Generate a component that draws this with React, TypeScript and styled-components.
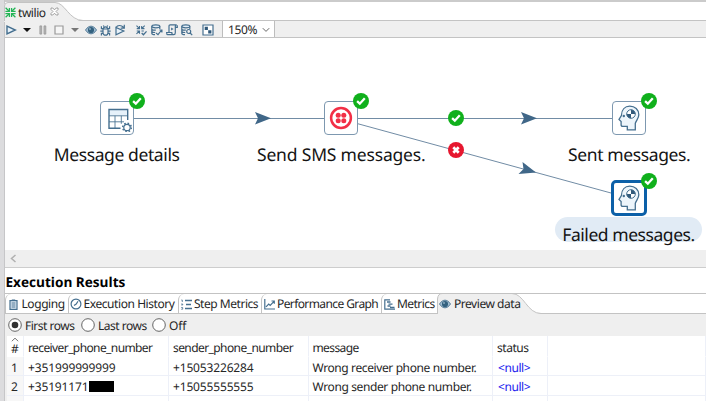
import React from 'react';
import styled, { createGlobalStyle } from 'styled-components';

const BLUE = '#456f8f';
const LINE = '#c3c3c3';

const Global = createGlobalStyle`
  *, *::before, *::after { box-sizing: border-box; }
  body { margin: 0; background: #fff; overflow: hidden; }
  svg { display: block; flex: none; }
`;

const Window = styled.div`
  width: 706px;
  height: 401px;
  display: flex;
  overflow: hidden;
  background: #fff;
  color: #262626;
  font: 12px/16px 'Noto Sans', 'Open Sans', sans-serif;
  text-rendering: geometricPrecision;
`;

const Sash = styled.div`
  flex: none;
  width: 5px;
  background: #dcdcde;
  border-right: 1px solid #c6c6c8;
`;

const Main = styled.div`
  flex: 1;
  min-width: 0;
  display: flex;
  flex-direction: column;
`;

const Text = styled.span<{ $track?: number }>`
  white-space: nowrap;
  letter-spacing: ${p => p.$track ?? 0}px;
`;

const EditorTabs = styled.div`
  height: 21px;
  flex: none;
  border-top: 2px solid #cbcbcb;
  border-bottom: 1px solid ${LINE};
`;

const EditorTab = styled.div`
  position: relative;
  width: 82px;
  height: 19px;
  display: flex;
  align-items: center;
  padding-top: 2px;
  gap: 2px;
`;

const TabShape = styled.svg`
  position: absolute;
  left: 0;
  top: 0;
  overflow: visible;
`;

const Front = styled.div<{ $ml?: number; $mt?: number }>`
  position: relative;
  display: flex;
  margin-left: ${p => p.$ml ?? 0}px;
  margin-top: ${p => p.$mt ?? 0}px;
`;

const Toolbar = styled.div`
  height: 17px;
  flex: none;
  display: flex;
  align-items: center;
  background: #efefef;
  border-bottom: 1px solid ${LINE};
`;

const Tool = styled.div<{ $w: number }>`
  width: ${p => p.$w}px;
  flex: none;
  display: flex;
  align-items: center;
`;

const ZoomBox = styled.div`
  width: 53px;
  height: 16px;
  display: flex;
  align-items: center;
  justify-content: space-between;
  padding: 2px 4px 0 5px;
  background: #fff;
  border-left: 1px solid #bdbdbd;
  border-right: 1px solid #bdbdbd;
`;

const Canvas = styled.div`
  position: relative;
  height: 212px;
  flex: none;
  overflow: hidden;
  background: #fff;
`;

const Hops = styled.svg`
  position: absolute;
  left: 0;
  top: 0;
`;

const Step = styled.div<{ $x: number; $y: number; $selected?: boolean }>`
  position: absolute;
  left: ${p => p.$x}px;
  top: ${p => p.$y}px;
  width: ${p => (p.$selected ? 36 : 34)}px;
  height: ${p => (p.$selected ? 36 : 34)}px;
  display: flex;
  align-items: center;
  justify-content: center;
  background: #fff;
  border: ${p => (p.$selected ? '3px solid #0c60a8' : '1px solid #7d98b0')};
  border-radius: ${p => (p.$selected ? 5 : 4)}px;
`;

const Badge = styled.div<{ $x: number; $y: number }>`
  position: absolute;
  left: ${p => p.$x - 8}px;
  top: ${p => p.$y - 8}px;
`;

const StepLabel = styled.div<{ $x: number; $y: number; $track?: number }>`
  position: absolute;
  left: ${p => p.$x}px;
  top: ${p => p.$y}px;
  font-size: 17.5px;
  line-height: 24px;
  color: #141414;
  white-space: nowrap;
  letter-spacing: ${p => p.$track ?? 0}px;
`;

const LabelPill = styled.div`
  position: absolute;
  left: 550px;
  top: 179px;
  width: 147px;
  height: 25px;
  border-radius: 13px;
  background: #e1ebf5;
`;

const ScrollStrip = styled.div`
  height: 18px;
  flex: none;
  display: flex;
  align-items: center;
  padding-left: 5px;
  background: #efefef;
  border-bottom: 1px solid #cdcdcd;
`;

const Heading = styled.h2`
  margin: 0;
  height: 25px;
  flex: none;
  padding-left: 0.5px;
  font-family: 'Open Sans', 'Noto Sans', sans-serif;
  font-size: 13.6px;
  line-height: 28px;
  font-weight: 700;
  color: #000;
`;

const ResultTabs = styled.div`
  position: relative;
  height: 21px;
  flex: none;
  display: flex;
  border-top: 1px solid ${LINE};
  border-bottom: 1px solid ${LINE};
`;

const ResultTab = styled.div<{ $w: number; $gap?: number; $pad?: number }>`
  width: ${p => p.$w}px;
  flex: none;
  height: 19px;
  display: flex;
  align-items: center;
  gap: ${p => p.$gap ?? 3}px;
  padding: 1px 0 0 ${p => p.$pad ?? 2}px;
  border-left: 1px solid ${LINE};
  border-top-left-radius: 6px;
`;

const ActiveTab = styled.div`
  position: relative;
  width: 104px;
  height: 20px;
  display: flex;
  align-items: center;
  gap: 3px;
  padding: 0 0 0 2px;
`;

const Radios = styled.div`
  height: 22px;
  flex: none;
  display: flex;
  align-items: center;
  padding-left: 3px;
  background: #efefef;
`;

const Radio = styled.div<{ $w: number }>`
  width: ${p => p.$w}px;
  flex: none;
  display: flex;
  align-items: center;
  gap: 3px;

  ${Text} {
    padding-top: 1px;
  }
`;

const TableFrame = styled.div`
  flex: 1;
  padding-left: 2px;
  background: #efefef;
`;

const Table = styled.div`
  height: 100%;
  display: grid;
  grid-template-columns: 17px 145px 140px 184px 55px 1fr;
  grid-template-rows: 21px 19px 20px 6px;
  background: #fff;
`;

const Cell = styled.div<{ $head?: boolean; $index?: boolean; $pad?: number }>`
  display: flex;
  align-items: flex-start;
  padding: ${p => (p.$head ? '4px' : '3px')} 0 0 ${p => p.$pad ?? 4}px;
  min-height: 0;
  border-right: 1px solid #edf0f8;
  border-bottom: 1px solid ${p => (p.$head ? 'transparent' : '#edf0f8')};
  background: ${p => (p.$index ? '#f7f7f7' : '#fff')};
`;

const IndexHead = styled(Cell)`
  flex-direction: column;
  padding: 1px 0 0 4px;
  line-height: 13px;
`;

const Null = styled(Text)`
  color: #2222ee;
`;

const Redaction = styled.span`
  width: 25px;
  height: 11px;
  margin: 2px 0 0 1px;
  background: #000;
`;

const Check = () => (
  <svg width="16" height="16" viewBox="0 0 16 16">
    <circle cx="8" cy="8" r="8" fill="#10b01c" />
    <path d="M4.1 8.2 6.8 10.7 11.8 5.3" fill="none" stroke="#fff" strokeWidth="2.3" />
  </svg>
);

const Cross = () => (
  <svg width="16" height="16" viewBox="0 0 16 16">
    <circle cx="8" cy="8" r="8" fill="#e6172f" />
    <path d="m5.3 5.3 5.4 5.4m0-5.4-5.4 5.4" stroke="#fff" strokeWidth="2.7" />
  </svg>
);

const GridIcon = () => (
  <svg width="28" height="26" viewBox="0 0 28 26" fill="none" stroke={BLUE}>
    <path d="M4 4h19v5.5H4z" fill="#e6f1fa" stroke="none" />
    <path d="M15.5 22.3H4V3.5h18.7v10.5" strokeWidth="1.4" />
    <path d="M4 9.8h18.5M4 15.8h15M10 9.8v12.5M16.3 9.8v8" strokeWidth="1" opacity=".85" />
    <circle cx="22" cy="21.5" r="3.2" fill="#fff" strokeWidth="1.2" />
    <circle cx="22" cy="21.5" r="4.3" strokeWidth="1.5" strokeDasharray="1.6 1.78" />
  </svg>
);

const TwilioIcon = () => (
  <svg width="24" height="24" viewBox="0 0 24 24">
    <circle cx="12" cy="12" r="9.9" fill="#fff" stroke="#f22f46" strokeWidth="2.5" />
    <g fill="#f22f46">
      <circle cx="9.2" cy="9.2" r="2.5" />
      <circle cx="14.8" cy="9.2" r="2.5" />
      <circle cx="9.2" cy="14.8" r="2.5" />
      <circle cx="14.8" cy="14.8" r="2.5" />
    </g>
  </svg>
);

const HeadIcon = () => (
  <svg width="24" height="28" viewBox="0 0 24 28">
    <path
      d="M10.3 25.9v-3.600H5.8c-1.200 0-1.700-.5-1.700-1.600v-3.200L2 15.500l2.400-4C4.600 5.500 8 2.200 12.700 2.200c5.300 0 9.100 3.500 9.100 8.600 0 3.600-2.300 5.300-3.500 8.500v6.600z"
      fill="#edf5fb"
      stroke={BLUE}
      strokeWidth="1.3"
    />
    <circle cx="14" cy="10" r="4.3" fill="#fff" />
    <path d="M14 10V5.7a4.3 4.3 0 0 1 4.3 4.3zM14 10v4.3a4.3 4.3 0 0 1-4.3-4.3z" fill="#31597a" />
    <circle cx="14" cy="10" r="4.3" fill="none" stroke={BLUE} strokeWidth="1" />
    <circle cx="6.8" cy="12" r="1.2" fill={BLUE} />
  </svg>
);

const ConvergeIcon = ({ color }: { color: string }) => (
  <svg width="11" height="11" viewBox="0 0 11 11" fill="none" stroke={color} strokeWidth="1.3">
    <path d="m.6.8 3.6 3.4m6.2-3.4L6.8 4.2M.6 10.2l3.6-3.4m6.2 3.4L6.8 6.8" />
    <path d="M4.4 1v3.400H.4M6.6 1v3.400h4M4.4 10V6.600h-4M6.6 10V6.600h4" />
  </svg>
);

const CloseIcon = () => (
  <svg width="9" height="9" viewBox="0 0 9 9" fill="#fff" stroke="#8c8c8c" strokeWidth=".8">
    <path d="M1 1h1.800l1.700 1.900L6.200 1H8v1.500l-2 2 2 2V8H6.200L4.500 6.200 2.800 8H1V6.500l2-2-2-2z" />
  </svg>
);

const PlayIcon = () => (
  <svg width="11" height="10" viewBox="0 0 11 10" fill="#e8f2fa" stroke={BLUE} strokeWidth="1.4">
    <path d="M1 1.2v7.6L9.3 5z" />
  </svg>
);

const CaretIcon = ({ color }: { color: string }) => (
  <svg width="8" height="10" viewBox="0 0 8 10">
    <path d="M0 3h8L4 7z" fill={color} />
  </svg>
);

const PauseIcon = () => (
  <svg width="8" height="10" viewBox="0 0 8 10" fill="#bababa" stroke="#969696" strokeWidth=".8">
    <path d="M.9.9h1.800v8.200H.9zM5 .9h1.800v8.200H5z" />
  </svg>
);

const StopIcon = () => (
  <svg width="10" height="10" viewBox="0 0 10 10">
    <path d="M1 1h8v8H1z" fill="#f6f6f6" stroke="#9a9a9a" strokeWidth="1.2" />
  </svg>
);

const EyeIcon = () => (
  <svg width="12" height="10" viewBox="0 0 12 10">
    <path d="M.5 5C2.5 2 4.4 1.200 6 1.200S9.5 2 11.5 5C9.5 8 7.6 8.800 6 8.800S2.5 8 .5 5z" fill="#a9c3d6" stroke={BLUE} strokeWidth=".9" />
    <circle cx="6" cy="5" r="3.1" fill="#33617f" />
    <circle cx="5" cy="4" r=".8" fill="#c7dbe8" />
  </svg>
);

const BugIcon = () => (
  <svg width="11" height="11" viewBox="0 0 11 11" fill="none" stroke={BLUE} strokeWidth="1.2">
    <path d="M3 4h5v3.700A2.500 2.500 0 0 1 3 7.700zM3.400 4a2.100 2.100 0 0 1 4.200 0" />
    <path d="M1.400 1.200v2.500H3M9.600 1.200v2.500H8M.3 6.200H3m5 0h2.700M1.400 10.500V8.400H3m6.600 2.100V8.400H8M4.100 1.700 3.300.5m3.600 1.200.8-1.200" />
  </svg>
);

const ReplayIcon = () => (
  <svg width="11" height="12" viewBox="0 0 11 12" fill="none" stroke={BLUE} strokeWidth="1.2">
    <path d="M1 3.400v7.300l7.800-3.700z" fill="#e8f2fa" />
    <path d="M1 3.500C2.500 1 6 .7 8.700 3.500M9.300.8v3.400H5.700" />
  </svg>
);

const VerifyIcon = () => (
  <svg width="11" height="11" viewBox="0 0 12 12" fill="none" stroke={BLUE} strokeWidth="1.2">
    <path d="m.5.8 3 3m6-3-3 3M.5 9.800l3-3M3.800 1v3h-3M6.200 1v3h3M3.800 9.600v-3h-3M6 6.500h2.500" />
    <path d="m6.200 8.700 1.900 1.900 3.400-3.700" strokeWidth="1.4" />
  </svg>
);

const DatabaseIcon = ({ search }: { search?: boolean }) => (
  <svg width="12" height="12" viewBox="0 0 12 12" fill="none" stroke={BLUE} strokeWidth="1.2">
    <ellipse cx="4.8" cy="2.3" rx="4" ry="1.5" fill="#e3eef7" />
    <path d="M.8 2.300v6.900c0 .9 1.400 1.500 3.200 1.500M8.800 2.300V5M.8 4.700c0 1.200 2 1.500 4 1.500M.8 7c0 1 1.300 1.500 3.400 1.500" />
    {search ? (
      <>
        <circle cx="7.7" cy="7.5" r="2" fill="#efefef" />
        <path d="m9.200 9 2 2.200" />
      </>
    ) : (
      <path d="m5 9 2 1.600L10.600 6m-2.200 0h2.500v2.400" />
    )}
  </svg>
);

const ScriptIcon = () => (
  <svg width="12" height="12" viewBox="0 0 12 12" fill="none" stroke={BLUE} strokeWidth="1.2">
    <path d="M3 8V1.700C3 1 3.500.8 4.200.8h6.500c-1 0-1.400.5-1.400 1.400v6.600c0 1.300-.6 1.900-1.600 1.900H1.800C1 10.700.6 10 .6 8.500h5.200c0 1.500.5 2.200 1.500 2.200M9.300 3.300h2V1.200" />
    <path d="M5.100 3.400v3.200l2.500-1.600z" fill={BLUE} stroke="none" />
  </svg>
);

const CheckerIcon = () => (
  <svg width="12" height="12" viewBox="0 0 12 12">
    <path d="M1 1h10v10H1z" fill="#fff" stroke={BLUE} strokeWidth="1.2" />
    <path d="M2.700 2.700h3.200v3.200H2.700zM6.200 6.200h3.200v3.200H6.200z" fill="#31597a" />
  </svg>
);

const LogIcon = () => (
  <svg width="9" height="11" viewBox="0 0 9 11" fill="none" stroke={BLUE}>
    <path d="M1 1.700h7v8.600H1z" fill="#e3eef7" strokeWidth="1.2" />
    <path d="M2.800 1h3.400M2.500 4h4M2.500 6h4M2.500 8h4" />
  </svg>
);

const ClockIcon = () => (
  <svg width="12" height="12" viewBox="0 0 12 12" fill="none" stroke={BLUE} strokeWidth="1.2">
    <circle cx="6" cy="6" r="4.9" />
    <path d="M4 7.500 6.200 6 8 3.200" />
  </svg>
);

const StepsIcon = () => (
  <svg width="11" height="11" viewBox="0 0 11 11" fill="none" stroke={BLUE}>
    <path d="M4 1.500h7M5 5.500h5M4 9.500h7" strokeWidth="1.3" />
    <path d="M.3 1h1v2M.2 5h1.500v1H.3M.2 8.500h1.500v1.700H.2" strokeWidth=".8" />
  </svg>
);

const GraphIcon = () => (
  <svg width="11" height="11" viewBox="0 0 11 11" fill="none" stroke={BLUE} strokeWidth="1.2">
    <path d="M.8 0v10H11M2 7.800 4.700 5l1.500 1.400L10 2.400M7.500 2h2.800v2.800" />
  </svg>
);

const MetricsIcon = () => (
  <svg width="11" height="11" viewBox="0 0 11 11" fill="none" stroke={BLUE} strokeWidth="1.2">
    <path d="M6 .8H.8v9.400H11" />
    <path d="M3 3h3.500M4.500 5.200h4M3.500 7h3M6 8.500h4.500" strokeWidth="1.3" />
  </svg>
);

const RadioIcon = ({ on }: { on?: boolean }) => (
  <svg width="14" height="14" viewBox="0 0 14 14">
    <circle cx="7" cy="7" r="6.3" fill="#fff" stroke="#555" strokeWidth=".9" />
    {on && <circle cx="7" cy="7" r="3.3" fill="#303030" />}
  </svg>
);

const tools: [number, React.ReactNode][] = [
  [17, <PlayIcon />],
  [16, <CaretIcon color="#111" />],
  [15, <PauseIcon />],
  [17, <StopIcon />],
  [14, <CaretIcon color="#777" />],
  [15, <EyeIcon />],
  [15, <BugIcon />],
  [21, <ReplayIcon />],
  [15, <VerifyIcon />],
  [15, <DatabaseIcon />],
  [15, <ScriptIcon />],
  [21, <DatabaseIcon search />],
  [20, <CheckerIcon />],
];

const resultTabs: { label: string; w: number; track: number; gap?: number; pad?: number; icon: React.ReactNode }[] = [
  { label: 'Logging', w: 63, track: -0.43, gap: 4, pad: 2.5, icon: <LogIcon /> },
  { label: 'Execution History', w: 110, track: -0.43, gap: 2, pad: 0.5, icon: <ClockIcon /> },
  { label: 'Step Metrics', w: 83, track: -0.47, gap: 2, icon: <StepsIcon /> },
  { label: 'Performance Graph', w: 120, track: -0.6, gap: 2, icon: <GraphIcon /> },
  { label: 'Metrics', w: 56, track: -0.57, gap: 2, icon: <MetricsIcon /> },
];

const hopColor = '#718ca5';
const arrowColor = '#406788';

export default function App() {
  return (
    <Window>
      <Global />
      <Sash />
      <Main>
        <EditorTabs>
          <EditorTab>
            <TabShape width="82" height="20" viewBox="0 0 82 20">
              <path d="M-1 20V4Q-1 .5 3 .5h48c10 0 14 19 28 19v.5z" fill="#efefef" />
              <path d="M-.5 19V4Q-.5 .5 3 .5h47c10 0 14 18 28 18h4" fill="none" stroke={LINE} />
            </TabShape>
            <Front $mt={-1}>
              <ConvergeIcon color="#22b455" />
            </Front>
            <Front>
              <Text $track={-0.45}>twilio</Text>
            </Front>
            <Front $ml={2} $mt={-2}>
              <CloseIcon />
            </Front>
          </EditorTab>
        </EditorTabs>

        <Toolbar>
          <Front $ml={1} $mt={2}>
            {tools.map(([w, icon], i) => (
              <Tool key={i} $w={w}>{icon}</Tool>
            ))}
          </Front>
          <ZoomBox>
            <Text $track={-0.35}>150%</Text>
            <svg width="8" height="6" viewBox="0 0 8 6">
              <path d="m.8 1.200 3.200 3.200 3.200-3.200" fill="none" stroke="#666" />
            </svg>
          </ZoomBox>
        </Toolbar>

        <Canvas>
          <Hops width="701" height="212" viewBox="5 38 701 212">
            <path d="M133 118.500h191M357 118.500h255M357 123.500l254 69.500" fill="none" stroke={hopColor} />
            <path d="m255 112 16 6.200-16 6.200 3-6.200zM521 112l16 6.200-16 6.200 3-6.200z" fill={arrowColor} />
            <path d="m522.500 162 13.500 10.500-17.500 1.500 5-5z" fill={arrowColor} />
          </Hops>
          <Step $x={95} $y={63}><Front $ml={4} $mt={2}><GridIcon /></Front></Step>
          <Step $x={319} $y={63}><TwilioIcon /></Step>
          <Step $x={607} $y={63}><HeadIcon /></Step>
          <Step $x={606} $y={142} $selected><HeadIcon /></Step>
          <Badge $x={132} $y={63}><Check /></Badge>
          <Badge $x={356} $y={63}><Check /></Badge>
          <Badge $x={644} $y={63}><Check /></Badge>
          <Badge $x={644} $y={143}><Check /></Badge>
          <Badge $x={451} $y={80}><Check /></Badge>
          <Badge $x={451} $y={112}><Cross /></Badge>
          <LabelPill />
          <StepLabel $x={48.7} $y={105} $track={-0.39}>Message details</StepLabel>
          <StepLabel $x={252} $y={105} $track={-0.18}>Send SMS messages.</StepLabel>
          <StepLabel $x={563} $y={105} $track={-0.38}>Sent messages.</StepLabel>
          <StepLabel $x={557.3} $y={185} $track={-0.45}>Failed messages.</StepLabel>
        </Canvas>

        <ScrollStrip>
          <svg width="7" height="9" viewBox="0 0 7 9">
            <path d="M5.500 1 1.500 4.500l4 3.500" fill="none" stroke="#b0b0b0" strokeWidth="1.5" />
          </svg>
        </ScrollStrip>

        <Heading>Execution Results</Heading>

        <ResultTabs>
          {resultTabs.map(t => (
            <ResultTab key={t.label} $w={t.w} $gap={t.gap} $pad={t.pad}>
              {t.icon}
              <Text $track={t.track}>{t.label}</Text>
            </ResultTab>
          ))}
          <ActiveTab>
            <TabShape width="104" height="20" viewBox="0 0 104 20">
              <path d="M.5 20V5Q1 0 5 0h70c12 0 15 19.500 29 19.500v.5z" fill="#efefef" />
              <path d="M.5 20V5Q1-.5 5-.5h70c12 0 15 20 29 20" fill="none" stroke={LINE} />
            </TabShape>
            <Front><EyeIcon /></Front>
            <Front><Text $track={-0.46}>Preview data</Text></Front>
          </ActiveTab>
        </ResultTabs>

        <Radios>
          <Radio $w={73}><RadioIcon on /><Text $track={-0.49}>First rows</Text></Radio>
          <Radio $w={71}><RadioIcon /><Text $track={-0.48}>Last rows</Text></Radio>
          <Radio $w={40}><RadioIcon /><Text $track={-0.1}>Off</Text></Radio>
        </Radios>

        <TableFrame>
          <Table>
            <IndexHead $head>
              <svg width="8" height="5" viewBox="0 0 8 5">
                <path d="m.8 4.200 3.200-3 3.200 3" fill="none" stroke="#777" />
              </svg>
              <Text>#</Text>
            </IndexHead>
            <Cell $head><Text $track={-0.6}>receiver_phone_number</Text></Cell>
            <Cell $head><Text $track={-0.58}>sender_phone_number</Text></Cell>
            <Cell $head $pad={3.5}><Text $track={-0.6}>message</Text></Cell>
            <Cell $head><Text $track={-0.45}>status</Text></Cell>
            <Cell $head />

            <Cell $index><Text>1</Text></Cell>
            <Cell><Text $track={-0.13}>+351999999999</Text></Cell>
            <Cell><Text $track={-0.16}>+15053226284</Text></Cell>
            <Cell $pad={3.5}><Text $track={-0.39}>Wrong receiver phone number.</Text></Cell>
            <Cell $pad={5}><Null $track={-0.42}>&lt;null&gt;</Null></Cell>
            <Cell />

            <Cell $index><Text>2</Text></Cell>
            <Cell><Text $track={-0.15}>+35191171</Text><Redaction /></Cell>
            <Cell><Text $track={-0.16}>+15055555555</Text></Cell>
            <Cell $pad={3.5}><Text $track={-0.38}>Wrong sender phone number.</Text></Cell>
            <Cell $pad={5}><Null $track={-0.42}>&lt;null&gt;</Null></Cell>
            <Cell />

            <Cell $index /><Cell /><Cell /><Cell /><Cell /><Cell />
          </Table>
        </TableFrame>
      </Main>
    </Window>
  );
}
